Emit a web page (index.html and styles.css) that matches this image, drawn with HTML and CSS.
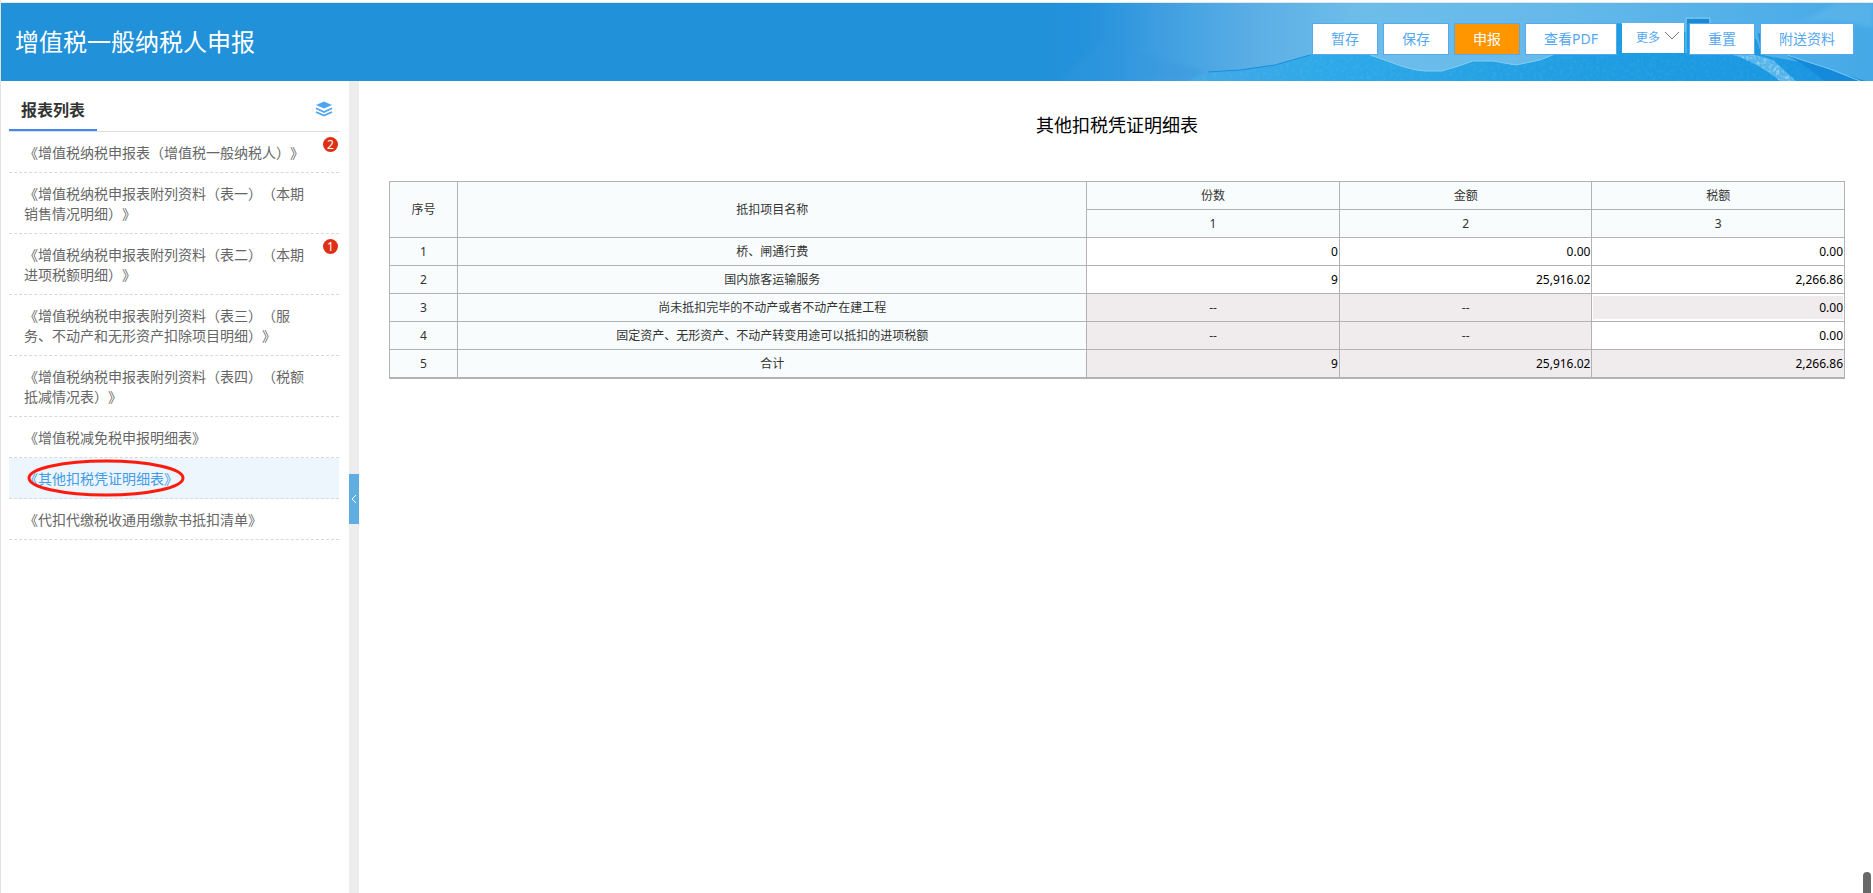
FILE: index.html
```html
<!DOCTYPE html>
<html lang="zh-CN">
<head>
<meta charset="utf-8">
<title>增值税一般纳税人申报</title>
<link rel="stylesheet" href="styles.css">
</head>
<body>
<div class="app">
  <header class="header">
    <svg class="scenery" viewBox="0 0 833 78" preserveAspectRatio="none" aria-hidden="true">
      <defs>
        <linearGradient id="sky" x1="0" y1="0" x2="1" y2="0">
          <stop offset="0" stop-color="#2191da"/>
          <stop offset="0.06" stop-color="#2592dc"/>
          <stop offset="0.15" stop-color="#409fe1"/>
          <stop offset="0.26" stop-color="#5bafe5"/>
          <stop offset="0.38" stop-color="#6dbdea"/>
          <stop offset="0.62" stop-color="#65b9ea"/>
          <stop offset="1" stop-color="#45a9e7"/>
        </linearGradient>
        <linearGradient id="sea" x1="0" y1="0" x2="1" y2="0">
          <stop offset="0" stop-color="#45a8e6"/>
          <stop offset="0.2" stop-color="#2ea9e8"/>
          <stop offset="0.6" stop-color="#1f9de2"/>
          <stop offset="0.85" stop-color="#1a98e1"/>
          <stop offset="1" stop-color="#1a94df"/>
        </linearGradient>
        <filter id="soft"><feGaussianBlur stdDeviation="2"/></filter>
        <filter id="spray" x="0" y="0" width="100%" height="100%">
          <feTurbulence type="fractalNoise" baseFrequency="0.3" numOctaves="2" seed="4"/>
          <feColorMatrix values="0 0 0 0 0.75  0 0 0 0 0.92  0 0 0 0 1  1.4 0 0 0 -0.65"/>
          <feComposite in2="SourceGraphic" operator="in"/>
        </filter>
      </defs>
      <rect width="833" height="78" fill="url(#sky)"/>
      <path d="M60 38 Q110 53 168 69 L148 78 H20Z" fill="#3598dd" opacity=".35" filter="url(#soft)"/>
      <path d="M148 78 Q158 72 168 69 L200 67 L235 62 L270 52 Q285 40 325 50 L350 59 Q370 67 385 68 H402 Q420 63 433 58 H453 L476 62 L500 57 L515 51 L560 33 L575 20 L605 23 L646 29 L647 16 H669 V34 L716 36 L722 52 L765 60 L790 67 L826 78Z" fill="url(#sea)"/>
      <path d="M325 50 L350 59 Q370 67 385 68 H402 Q420 63 433 58 H453 L476 62 L500 57 L515 51" fill="none" stroke="#80cdf2"/>
      <path d="M148 78 Q158 72 168 69 L200 67 L235 62 L270 52 Q285 40 325 50 L350 59 L385 68 L405 68 L433 59 L560 40 L646 34 L716 42 L790 78Z" fill="#fff" opacity=".14" filter="url(#spray)"/>
      <path d="M168 69 L200 67 L235 62 L270 52" fill="none" stroke="#168fdd"/>
      <path d="M646 50 V15 H670 V20" fill="none" stroke="#7fc8f0"/>
      <path d="M647 16 H669 V21 H647Z" fill="#198bd6"/>
      <path d="M718 30 L721 48 L748 52 L739 39Z" fill="#168edc"/>
      <path d="M744 51 L765 58 L790 66 L820 78 H784 Q767 62 744 51Z" fill="#168ada"/>
      <path d="M744 51 L765 58 L790 66 L820 78" fill="none" stroke="#79caf2"/>
      <path d="M690 51 Q718 50 733 57 L756 78 H740 Q716 58 690 51Z" fill="#87cdf3" opacity=".55"/>
      <path d="M690 51 Q718 50 733 57 L756 78 H740 Q716 58 690 51Z" fill="#fff" filter="url(#spray)"/>
      <path d="M745 22 Q775 15 795 0 H833 V25 Q785 12 745 22Z" fill="#75c1ed" opacity=".35" filter="url(#soft)"/>
    </svg>
    <h1 class="header-title">增值税一般纳税人申报</h1>
    <div class="actions">
      <button class="btn" type="button">暂存</button>
      <button class="btn" type="button">保存</button>
      <button class="btn btn-primary" type="button">申报</button>
      <button class="btn" type="button">查看PDF</button>
      <button class="btn btn-more" type="button">更多<svg width="16" height="10" viewBox="0 0 16 10" aria-hidden="true"><path d="M1 1 L8 8 L15 1" fill="none" stroke="#777" stroke-width="1"/></svg></button>
      <button class="btn" type="button">重置</button>
      <button class="btn" type="button">附送资料</button>
    </div>
  </header>
  <div class="body">
    <aside class="sidebar">
      <div class="side-head">
        <h2 class="side-title">报表列表</h2>
        <svg class="layers" width="18" height="16" viewBox="0 0 18 16" aria-hidden="true">
          <path d="M9 0.5 L17 4 L9 7.6 L1 4Z" fill="#4ba5ef"/>
          <path d="M1 7.3 L9 11 L17 7.3 M1 10.9 L9 14.6 L17 10.9" fill="none" stroke="#4ba5ef" stroke-width="1.7"/>
        </svg>
      </div>
      <nav class="list">
        <a class="item" href="#">《增值税纳税申报表（增值税一般纳税人）》<span class="badge">2</span></a>
        <a class="item" href="#">《增值税纳税申报表附列资料（表一）（本期销售情况明细）》</a>
        <a class="item" href="#">《增值税纳税申报表附列资料（表二）（本期进项税额明细）》<span class="badge">1</span></a>
        <a class="item" href="#">《增值税纳税申报表附列资料（表三）（服务、不动产和无形资产扣除项目明细）》</a>
        <a class="item" href="#">《增值税纳税申报表附列资料（表四）（税额抵减情况表）》</a>
        <a class="item" href="#">《增值税减免税申报明细表》</a>
        <a class="item active" href="#">《其他扣税凭证明细表》<svg class="ring" width="158" height="38" viewBox="0 0 158 38" aria-hidden="true"><ellipse cx="79" cy="19" rx="77" ry="17" fill="none" stroke="#fb1c0d" stroke-width="3"/></svg></a>
        <a class="item" href="#">《代扣代缴税收通用缴款书抵扣清单》</a>
      </nav>
    </aside>
    <div class="divider">
      <button class="collapse" type="button" aria-label="收起"><svg width="6" height="10" viewBox="0 0 6 10" aria-hidden="true"><path d="M5 1 L1 5 L5 9" fill="none" stroke="#fff" stroke-width="1"/></svg></button>
    </div>
    <main class="main">
      <h2 class="main-title">其他扣税凭证明细表</h2>
      <table class="grid">
        <colgroup><col class="c-no"><col class="c-name"><col class="c-val"><col class="c-val"><col class="c-val"></colgroup>
        <thead>
          <tr><th rowspan="2">序号</th><th rowspan="2">抵扣项目名称</th><th>份数</th><th>金额</th><th>税额</th></tr>
          <tr><th>1</th><th>2</th><th>3</th></tr>
        </thead>
        <tbody>
          <tr><th>1</th><th>桥、闸通行费</th><td>0</td><td>0.00</td><td>0.00</td></tr>
          <tr><th>2</th><th>国内旅客运输服务</th><td>9</td><td>25,916.02</td><td>2,266.86</td></tr>
          <tr><th>3</th><th>尚未抵扣完毕的不动产或者不动产在建工程</th><td class="off none">--</td><td class="off none">--</td><td class="off inset">0.00</td></tr>
          <tr><th>4</th><th>固定资产、无形资产、不动产转变用途可以抵扣的进项税额</th><td class="off none">--</td><td class="off none">--</td><td>0.00</td></tr>
          <tr><th>5</th><th>合计</th><td class="off">9</td><td class="off">25,916.02</td><td class="off">2,266.86</td></tr>
        </tbody>
      </table>
    </main>
  </div>
  <div class="thumb"></div>
</div>
</body>
</html>
```
FILE: styles.css
```css
* { box-sizing: border-box; }
body {
  margin: 0;
  font-family: "Noto Sans", "Noto Sans CJK SC", sans-serif;
  color: #333;
  background: #fff;
  text-spacing-trim: space-all;
}
h1, h2 { margin: 0; }
button { font-family: inherit; cursor: pointer; }
.app {
  position: relative;
  display: flex;
  flex-direction: column;
  min-height: 100vh;
  padding-top: 2px;
  border-left: 1px solid #e2e2e2;
}
.header {
  position: relative;
  display: flex;
  align-items: center;
  justify-content: space-between;
  height: 79px;
  padding: 0 19px 0 14px;
  border-top: 1px solid #e6e6e6;
  background: #2191da;
}
.scenery {
  position: absolute;
  top: 0;
  right: 0;
  width: 833px;
  height: 100%;
}
.header-title {
  position: relative;
  font-size: 24px;
  font-weight: 400;
  line-height: 36px;
  color: #fff;
}
.actions {
  position: relative;
  display: flex;
  align-self: flex-start;
  gap: 5px;
  padding-top: 20px;
}
.btn {
  height: 32px;
  padding: 0 18px;
  border: 1px solid #57a9ee;
  border-radius: 0;
  background: #fff;
  color: #55a7f0;
  font-size: 14px;
  line-height: 28px;
}
.btn-primary {
  background: #ff9600;
  color: #fff;
}
.btn-more {
  display: flex;
  align-items: center;
  gap: 4px;
  height: 30px;
  padding: 0 4px 0 14px;
  border: 0;
  font-size: 12px;
  line-height: 30px;
}
.btn-more svg { margin-bottom: 4px; }
.body {
  display: flex;
  flex: 1;
}
.sidebar {
  flex: 0 0 348px;
  padding: 10px 10px 0 8px;
}
.side-head {
  display: flex;
  justify-content: space-between;
  height: 41px;
  border-bottom: 1px solid #dcdee2;
}
.side-title {
  height: 40px;
  padding: 0 12px;
  border-bottom: 2px solid #4285f4;
  font-size: 16px;
  font-weight: 700;
  line-height: 38px;
}
.layers { margin: 10px 6px 0 0; }
.item {
  position: relative;
  display: block;
  padding: 11px 35px 9px 15px;
  border-bottom: 1px dashed #d9d9d9;
  font-size: 14px;
  line-height: 20px;
  color: #666;
  text-decoration: none;
}
.active {
  background: #edf5fd;
  color: #429ce8;
}
.badge {
  position: absolute;
  top: 5px;
  right: 1px;
  width: 15px;
  height: 15px;
  border-radius: 50%;
  background: #dd3014;
  color: #fff;
  font-size: 12px;
  line-height: 15px;
  text-align: center;
}
.ring {
  position: absolute;
  top: 1px;
  left: 18px;
}
.divider {
  display: flex;
  flex: 0 0 10px;
  align-items: flex-start;
  padding-top: 393px;
  background: #ededed;
}
.collapse {
  display: flex;
  align-items: center;
  justify-content: center;
  width: 10px;
  height: 50px;
  padding: 0;
  border: 0;
  background: #5fade1;
}
.main {
  flex: 1;
  padding: 30px 28px 0 30px;
}
.main-title {
  margin-bottom: 42px;
  font-size: 18px;
  font-weight: 400;
  line-height: 28px;
  text-align: center;
  color: #000;
}
.grid {
  width: 100%;
  table-layout: fixed;
  border-collapse: separate;
  border-spacing: 0;
  border: solid #b3b3b3;
  border-width: 1px 0 1px 1px;
  font-size: 12px;
  line-height: 18px;
}
.c-no { width: 68px; }
.c-val { width: 17.36%; }
.grid th, .grid td {
  height: 28px;
  padding: 0 1px;
  border: solid #b3b3b3;
  border-width: 0 1px 1px 0;
}
.grid th {
  background: #f8fcfd;
  font-weight: 400;
  text-align: center;
}
.grid td {
  color: #000;
  text-align: right;
}
.grid .off { background: #f0ecee; }
.grid .none {
  color: #333;
  text-align: center;
}
.grid .inset { box-shadow: inset 0 0 0 1px #fff, inset 0 2px #fff, inset 0 -2px #fff; }
.thumb {
  position: absolute;
  right: 2px;
  bottom: 0;
  width: 8px;
  height: 21px;
  border-radius: 4px 4px 0 0;
  background: #686868;
}
```
